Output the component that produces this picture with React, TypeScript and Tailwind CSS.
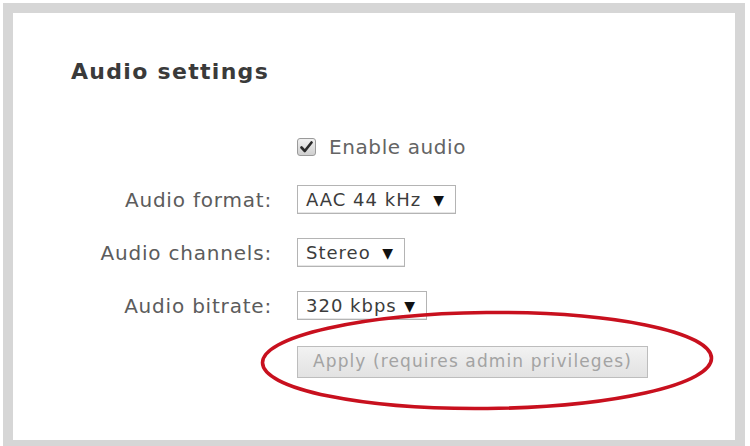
import React from "react";

const font = { fontFamily: '"DejaVu Sans", Verdana, sans-serif' };

function Select({ label, width }: { label: string; width: string }) {
  return (
    <div
      className={`flex h-[29px] items-center justify-between border border-[#b4b4b4] bg-white pl-[8px] pr-[10px] text-[18px] tracking-[1px] text-[#3c3c3c] shadow-[inset_0_-1px_0_#e6e6e6] ${width}`}
    >
      <span className="leading-none">{label}</span>
      <span className="text-[14px] leading-none text-[#111]">▼</span>
    </div>
  );
}

function Row({ label, children }: { label?: string; children: React.ReactNode }) {
  return (
    <div className="flex h-[53px] items-center">
      <div className="w-[259px] text-right text-[20px] tracking-[0.8px] text-[#5c5c5c]">{label}</div>
      <div className="ml-[25px] flex items-center">{children}</div>
    </div>
  );
}

export default function App() {
  return (
    <div className="relative h-[446px] w-[750px] overflow-hidden bg-white pl-[3px] pt-[3px]" style={font}>
      <div className="h-[447px] w-[742px] border-[10px] border-[#d6d6d6] bg-white">
        <div className="pl-[58px] pt-[45px] text-[22px] font-bold leading-[28px] tracking-[1.3px] text-[#3a3a3a]">
          Audio settings
        </div>
        <div className="mt-[34px] flex flex-col">
          <Row>
            <div className="flex items-center">
              <div className="flex h-[18px] w-[19px] items-center justify-center rounded-[3px] border border-[#9a9a9a] bg-gradient-to-b from-[#f0f0f0] to-[#cfcfcf]">
                <svg width="13" height="12" viewBox="0 0 13 12">
                  <path d="M1.5 6.5 L4.8 10 L11.5 1.5" fill="none" stroke="#2a2a2a" strokeWidth="2.6" strokeLinecap="round" strokeLinejoin="round" />
                </svg>
              </div>
              <span className="ml-[13px] text-[20px] tracking-[0.6px] text-[#646464]">Enable audio</span>
            </div>
          </Row>
          <Row label="Audio format:">
            <Select label="AAC 44 kHz" width="w-[159px]" />
          </Row>
          <Row label="Audio channels:">
            <Select label="Stereo" width="w-[108px]" />
          </Row>
          <Row label="Audio bitrate:">
            <Select label="320 kbps" width="w-[130px]" />
          </Row>
          <div className="mt-[14px] flex">
            <div className="ml-[284px] flex h-[32px] w-[351px] items-center justify-center border border-[#bdbdbd] bg-gradient-to-b from-[#f2f2f2] to-[#e2e2e2] text-[17px] tracking-[1.1px] text-[#a3a3a3]">
              Apply (requires admin privileges)
            </div>
          </div>
        </div>
      </div>
      <svg className="pointer-events-none absolute left-0 top-0" width="750" height="446" viewBox="0 0 750 446">
        <ellipse
          cx="487"
          cy="360.5"
          rx="224.5"
          ry="48"
          fill="none"
          stroke="#c8101e"
          strokeWidth="3.6"
          transform="rotate(-0.6 487 360.5)"
        />
      </svg>
    </div>
  );
}
